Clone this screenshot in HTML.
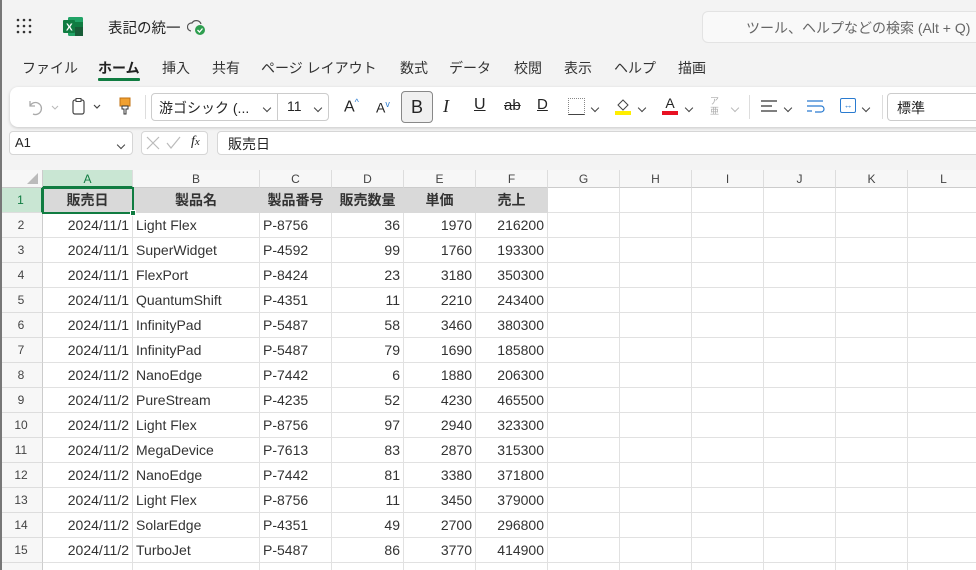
<!DOCTYPE html>
<html style="overflow:hidden;width:976px;height:570px"><head><meta charset="utf-8"><style>
*{margin:0;padding:0;box-sizing:border-box}
html,body{overflow:hidden}
body{width:976px;height:570px;background:#f3f3f3;font-family:"Liberation Sans","Noto Sans CJK JP",sans-serif;position:relative;color:#242424}
.a{position:absolute;white-space:nowrap}
.grid{position:absolute;left:0;top:170px;width:976px;height:400px;background:#fff;overflow:hidden}
.cell{position:absolute;height:25px;line-height:25px;font-size:14px;padding:0 3px;border-right:1px solid #e1e1e1;border-bottom:1px solid #e1e1e1;overflow:hidden;white-space:nowrap;color:#333}
.ch{position:absolute;top:0;height:18px;line-height:18px;font-size:12px;text-align:center;color:#444;background:#f7f7f7;border-right:1px solid #ddd;border-bottom:1px solid #ccc}
.rh{position:absolute;left:0;width:43px;height:25px;line-height:25px;text-align:center;font-size:12px;color:#444;background:#f7f7f7;border-right:1px solid #ccc;border-bottom:1px solid #ddd}
.chev{display:inline-block;width:6px;height:6px;border-right:1.3px solid #444;border-bottom:1.3px solid #444;transform:rotate(45deg)}
</style></head><body>
<div class="a" style="left:0;top:0;width:2px;height:570px;background:#777;z-index:5"></div>
<div class="a" style="left:16px;top:18px;width:16px;height:16px">
<svg width="16" height="16"><g fill="#333"><circle cx="2" cy="2" r="1.3"/><circle cx="8" cy="2" r="1.3"/><circle cx="14" cy="2" r="1.3"/><circle cx="2" cy="8" r="1.3"/><circle cx="8" cy="8" r="1.3"/><circle cx="14" cy="8" r="1.3"/><circle cx="2" cy="14" r="1.3"/><circle cx="8" cy="14" r="1.3"/><circle cx="14" cy="14" r="1.3"/></g></svg></div>
<div class="a" style="left:63px;top:17px"><svg width="20" height="19"><rect x="5" y="0" width="15" height="19" rx="1.5" fill="#21a366"/><rect x="12" y="5" width="8" height="5" fill="#107c41"/><rect x="12" y="10" width="8" height="9" fill="#185c37"/><rect x="0" y="3" width="12" height="13" rx="1" fill="#107c41"/><text x="3" y="13.5" font-size="10" font-weight="bold" fill="#fff" font-family="Liberation Sans">X</text></svg></div>
<div class="a" style="left:108px;top:17px;font-size:14.5px">表記の統一</div>
<div class="a" style="left:187px;top:18px"><svg width="20" height="18"><path d="M4 13a4 4 0 0 1 1-8 5 5 0 0 1 9 1" fill="none" stroke="#555" stroke-width="1.2"/><circle cx="13" cy="12" r="5" fill="#2e9e4f"/><path d="M10.5 12l2 2 3-3.5" stroke="#fff" stroke-width="1.3" fill="none"/></svg></div>
<div class="a" style="left:702px;top:11px;width:290px;height:32px;background:#f9f9f9;border:1px solid #e3e3e3;border-radius:6px"></div>
<div class="a" style="left:746px;top:18px;font-size:14px;color:#666">ツール、ヘルプなどの検索 (Alt + Q)</div>
<div class="a" style="left:22px;top:58px;font-size:14px;color:#333">
<span style="position:absolute;left:0">ファイル</span>
<span style="position:absolute;left:76px;font-weight:bold;color:#222">ホーム</span>
<span style="position:absolute;left:140px">挿入</span>
<span style="position:absolute;left:190px">共有</span>
<span style="position:absolute;left:239px">ページ レイアウト</span>
<span style="position:absolute;left:378px">数式</span>
<span style="position:absolute;left:427px">データ</span>
<span style="position:absolute;left:492px">校閲</span>
<span style="position:absolute;left:542px">表示</span>
<span style="position:absolute;left:592px">ヘルプ</span>
<span style="position:absolute;left:656px">描画</span>
</div>
<div class="a" style="left:98px;top:78px;width:42px;height:3px;background:#107c41;border-radius:1px"></div>
<div class="a" style="left:10px;top:87px;width:980px;height:40px;background:#fff;border-radius:8px;box-shadow:0 1px 3px rgba(0,0,0,.18)"></div>
<div class="a" style="left:25px;top:97px"><svg width="40" height="20"><path d="M5 4v5h5M5 9a6 6 0 1 1 3 8" fill="none" stroke="#aaa" stroke-width="1.3"/><path d="M27 9l3 3 3-3" fill="none" stroke="#bbb" stroke-width="1.1"/></svg></div>
<div class="a" style="left:72px;top:97px"><svg width="34" height="20"><rect x="1" y="3" width="11" height="14" rx="2" fill="none" stroke="#444" stroke-width="1.2"/><rect x="4" y="1.5" width="5" height="3" fill="#fff" stroke="#444"/><path d="M22 8l3 3 3-3" fill="none" stroke="#444" stroke-width="1.2"/></svg></div>
<div class="a" style="left:118px;top:96px"><svg width="14" height="20"><rect x="2" y="2" width="10" height="8" fill="#f0a030" stroke="#c07010"/><path d="M4 10h6v3H8v5H6v-5H4z" fill="none" stroke="#333"/></svg></div>
<div class="a" style="left:145px;top:95px;width:1px;height:24px;background:#ddd"></div>
<div class="a" style="left:151px;top:93px;width:178px;height:28px;border:1px solid #ccc;border-radius:4px"></div>
<div class="a" style="left:277px;top:94px;width:1px;height:26px;background:#ccc"></div>
<div class="a" style="left:159px;top:98px;font-size:14px">游ゴシック (...</div>
<div class="a" style="left:264px;top:98px"><span class="chev"></span></div>
<div class="a" style="left:287px;top:98px;font-size:14px">11</div>
<div class="a" style="left:315px;top:98px"><span class="chev"></span></div>
<div class="a" style="left:344px;top:97px;font-size:16px">A<sup style="font-size:9px;color:#2a7bd0">^</sup></div>
<div class="a" style="left:376px;top:99px;font-size:14px">A<sup style="font-size:9px;color:#2a7bd0">v</sup></div>
<div class="a" style="left:401px;top:91px;width:32px;height:32px;background:#f0f0f0;border:1px solid #888;border-radius:4px;text-align:center;line-height:30px;font-size:18px">B</div>
<div class="a" style="left:443px;top:96px;font-size:18px;font-family:'Liberation Serif';font-style:italic">I</div>
<div class="a" style="left:474px;top:96px;font-size:16px;text-decoration:underline">U</div>
<div class="a" style="left:504px;top:97px;font-size:15px;text-decoration:line-through">ab</div>
<div class="a" style="left:537px;top:96px;font-size:15px;text-decoration:underline">D</div>
<div class="a" style="left:568px;top:98px;width:17px;height:17px;border:1px dotted #888;border-bottom:1px solid #444"></div>
<div class="a" style="left:592px;top:98px"><span class="chev"></span></div>
<div class="a" style="left:615px;top:97px;width:14px;height:18px"><svg width="16" height="18"><path d="M3 8l5-5 5 5-5 5z" fill="none" stroke="#444"/><rect x="0" y="14" width="16" height="4" fill="#ffee00"/></svg></div>
<div class="a" style="left:639px;top:98px"><span class="chev"></span></div>
<div class="a" style="left:662px;top:95px;font-size:14px;width:16px;text-align:center">A</div>
<div class="a" style="left:662px;top:111px;width:16px;height:4px;background:#e81123"></div>
<div class="a" style="left:686px;top:98px"><span class="chev"></span></div>
<div class="a" style="left:710px;top:96px;font-size:9px;color:#aaa;line-height:10px">ア<br>亜</div>
<div class="a" style="left:732px;top:98px"><span class="chev" style="border-color:#bbb"></span></div>
<div class="a" style="left:749px;top:95px;width:1px;height:24px;background:#ddd"></div>
<div class="a" style="left:761px;top:99px"><svg width="16" height="14"><path d="M0 2h16M0 7h11M0 12h16" stroke="#333" stroke-width="1.2"/></svg></div>
<div class="a" style="left:785px;top:98px"><span class="chev"></span></div>
<div class="a" style="left:807px;top:99px"><svg width="18" height="16"><path d="M0 2h16M0 7h14a3 3 0 0 1 0 6h-6M0 12h5" fill="none" stroke="#2a7bd0" stroke-width="1.2"/></svg></div>
<div class="a" style="left:840px;top:98px;width:16px;height:15px;border:1.3px solid #2a7bd0;border-radius:2px;font-size:9px;color:#2a7bd0;text-align:center;line-height:12px">↔</div>
<div class="a" style="left:863px;top:98px"><span class="chev"></span></div>
<div class="a" style="left:882px;top:95px;width:1px;height:24px;background:#ddd"></div>
<div class="a" style="left:887px;top:93px;width:100px;height:28px;border:1px solid #ccc;border-radius:4px;padding:4px 9px;font-size:14px">標準</div>
<div class="a" style="left:9px;top:131px;width:124px;height:24px;background:#fff;border:1px solid #d6d6d6;border-radius:4px;padding:3px 5px;font-size:13px">A1</div>
<div class="a" style="left:118px;top:135px"><span class="chev"></span></div>
<div class="a" style="left:141px;top:131px;width:67px;height:24px;background:#fff;border:1px solid #d6d6d6;border-radius:4px"></div>
<div class="a" style="left:146px;top:136px"><svg width="40" height="14"><path d="M1 1l12 12M13 1L1 13" stroke="#bbb" stroke-width="1.2"/><path d="M21 7l4 5 9-11" fill="none" stroke="#bbb" stroke-width="1.2"/></svg></div>
<div class="a" style="left:191px;top:134px;font-size:14px;font-family:'Liberation Serif';font-style:italic">f<span style="font-size:11px">x</span></div>
<div class="a" style="left:217px;top:131px;width:770px;height:24px;background:#fff;border:1px solid #d6d6d6;border-radius:4px;padding:2px 10px;font-size:14px">販売日</div>
<div class="grid" id="g"></div>
<script>
var g=document.getElementById('g');
var cols=[43,133,260,332,404,476,548,620,692,764,836,908,980];
var L='ABCDEFGHIJKL';
var h='<div style="position:absolute;left:0;top:0;width:43px;height:18px;background:#f7f7f7;border-right:1px solid #ccc;border-bottom:1px solid #ccc"><svg style="position:absolute;right:4px;bottom:3px" width="11" height="11"><path d="M11 0v11H0z" fill="#bbb"/></svg></div>';
for(var i=0;i<12;i++){var s=i==0?'background:#c9e6d3;color:#107c41;border-bottom:2px solid #107c41':'';
h+='<div class="ch" style="left:'+cols[i]+'px;width:'+(cols[i+1]-cols[i])+'px;'+s+'">'+L[i]+'</div>';}
var data=[["販売日","製品名","製品番号","販売数量","単価","売上"],
["2024/11/1","Light Flex","P-8756",36,1970,216200],
["2024/11/1","SuperWidget","P-4592",99,1760,193300],
["2024/11/1","FlexPort","P-8424",23,3180,350300],
["2024/11/1","QuantumShift","P-4351",11,2210,243400],
["2024/11/1","InfinityPad","P-5487",58,3460,380300],
["2024/11/1","InfinityPad","P-5487",79,1690,185800],
["2024/11/2","NanoEdge","P-7442",6,1880,206300],
["2024/11/2","PureStream","P-4235",52,4230,465500],
["2024/11/2","Light Flex","P-8756",97,2940,323300],
["2024/11/2","MegaDevice","P-7613",83,2870,315300],
["2024/11/2","NanoEdge","P-7442",81,3380,371800],
["2024/11/2","Light Flex","P-8756",11,3450,379000],
["2024/11/2","SolarEdge","P-4351",49,2700,296800],
["2024/11/2","TurboJet","P-5487",86,3770,414900],
["","","","","",""]];
for(var r=0;r<16;r++){var y=18+r*25;
var rs=r==0?'background:#c9e6d3;color:#107c41;border-right:2px solid #107c41':'';
h+='<div class="rh" style="top:'+y+'px;'+rs+'">'+(r<15?(r+1):'')+'</div>';
for(var c=0;c<12;c++){var v=c<6?data[r][c]:'';var al=(c==0||c>=3)?'right':'left';var st='';
if(r==0&&c<6){al='center';st='background:#d9d9d9;font-weight:bold;border-right-color:#d9d9d9;border-bottom-color:#d9d9d9';}
h+='<div class="cell" style="left:'+cols[c]+'px;top:'+y+'px;width:'+(cols[c+1]-cols[c])+'px;text-align:'+al+';'+st+'">'+v+'</div>';}}
h+='<div style="position:absolute;left:42px;top:17px;width:92px;height:27px;border:2px solid #107c41"></div><div style="position:absolute;left:130px;top:40px;width:6px;height:6px;background:#107c41;border:1px solid #fff"></div>';
g.innerHTML=h;
</script>
</body></html>
